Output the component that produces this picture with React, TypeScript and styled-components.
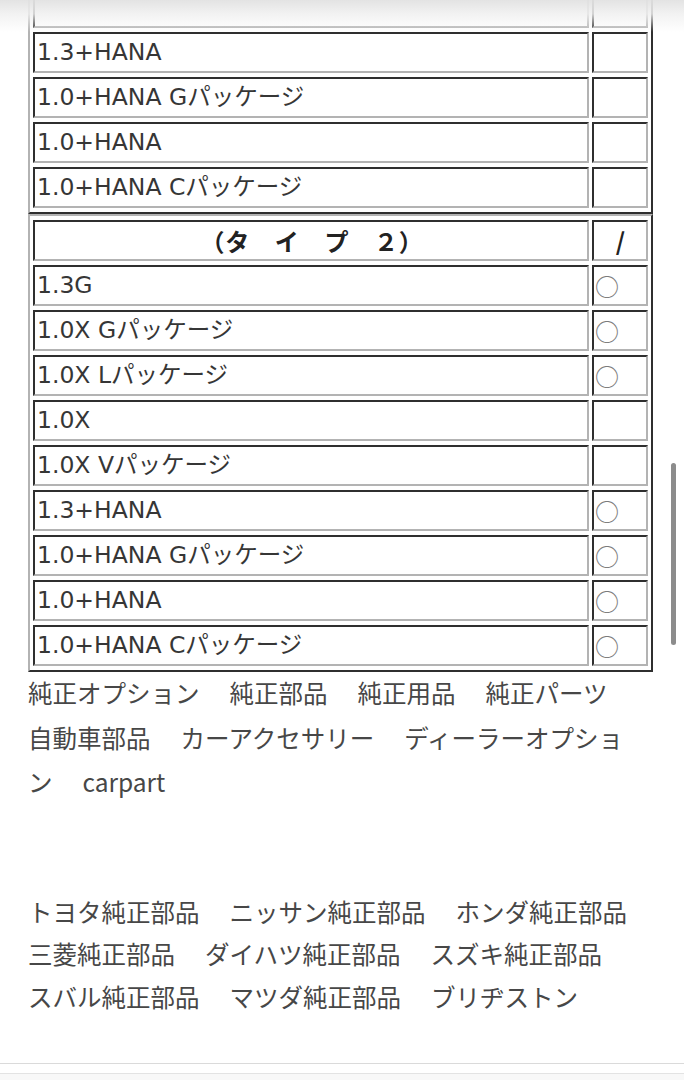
import React from "react";
import styled, { createGlobalStyle } from "styled-components";

const GlobalStyle = createGlobalStyle`
  html, body { margin: 0; padding: 0; background: #ffffff; }
  body { font-family: "Noto Sans CJK JP", "Noto Sans", sans-serif; }
`;

const Page = styled.div`
  position: relative;
  width: 684px;
  height: 1080px;
  overflow: hidden;
  background: #ffffff;
`;

const Content = styled.div`
  margin-top: -19px;
  padding-left: 28px;
`;

const SpecTable = styled.table`
  width: 625px;
  border-collapse: separate;
  border-spacing: 3px 4px;
  border-style: solid;
  border-width: 2px;
  border-color: #b3b3b3 #2f2f2f #2f2f2f #b3b3b3;
  table-layout: fixed;
`;

const Col = styled.col<{ $w?: number }>`
  width: ${(p) => (p.$w ? `${p.$w}px` : "auto")};
`;

const Row = styled.tr`
  height: 41px;
`;

const Cell = styled.td<{ $head?: boolean; $check?: boolean }>`
  box-sizing: border-box;
  border-style: solid;
  border-width: 2px;
  border-color: #2f2f2f #b3b3b3 #b3b3b3 #2f2f2f;
  padding: 0 0 0 ${(p) => (p.$check ? "1px" : "2px")};
  vertical-align: middle;
  white-space: nowrap;
  overflow: hidden;
  font-family: ${(p) =>
    p.$head || p.$check
      ? `"Noto Sans CJK JP", sans-serif`
      : `"DejaVu Sans", "Noto Sans CJK JP", sans-serif`};
  font-size: ${(p) => (p.$head || p.$check ? "24px" : "23.5px")};
  font-weight: ${(p) => (p.$head ? 700 : 400)};
  letter-spacing: ${(p) => (p.$head && !p.$check ? "0.8px" : "0")};
  text-align: ${(p) => (p.$head ? "center" : "left")};
  color: ${(p) => (p.$check && !p.$head ? "#7a7a7a" : p.$head ? "#222222" : "#363636")};
  line-height: 1;
`;

const Keywords = styled.div<{ $lh: number; $mt: number }>`
  width: 614px;
  margin-top: ${(p) => p.$mt}px;
  font-size: 24.5px;
  line-height: ${(p) => p.$lh}px;
  word-spacing: 24.5px;
  color: #474747;
`;

const Footer = styled.div`
  margin-top: 45px;
  border-top: 1.5px solid #dadada;
`;

const FooterBar = styled.div`
  margin-top: 9px;
  height: 30px;
  border-top: 1px solid #e3e3e3;
  background: #f8f8f8;
`;

const TopFade = styled.div`
  position: absolute;
  top: 0;
  left: 0;
  right: 0;
  height: 34px;
  background: linear-gradient(
    to bottom,
    rgba(226, 226, 226, 0.96) 0px,
    rgba(240, 240, 240, 0.85) 14px,
    rgba(255, 255, 255, 0) 32px
  );
  pointer-events: none;
`;

const Scrollbar = styled.div`
  position: absolute;
  left: 671px;
  top: 463px;
  width: 5px;
  height: 182px;
  border-radius: 3px;
  background: #8c8c8c;
`;

type Spec = { name: string; mark?: string };

const table1: Spec[] = [
  { name: "" },
  { name: "1.3+HANA" },
  { name: "1.0+HANA Gパッケージ" },
  { name: "1.0+HANA" },
  { name: "1.0+HANA Cパッケージ" },
];

const table2: Spec[] = [
  { name: "1.3G", mark: "○" },
  { name: "1.0X Gパッケージ", mark: "○" },
  { name: "1.0X Lパッケージ", mark: "○" },
  { name: "1.0X" },
  { name: "1.0X Vパッケージ" },
  { name: "1.3+HANA", mark: "○" },
  { name: "1.0+HANA Gパッケージ", mark: "○" },
  { name: "1.0+HANA", mark: "○" },
  { name: "1.0+HANA Cパッケージ", mark: "○" },
];

const keywords = [
  "純正オプション",
  "純正部品",
  "純正用品",
  "純正パーツ",
  "自動車部品",
  "カーアクセサリー",
  "ディーラーオプション",
  "carpart",
];

const makers = [
  "トヨタ純正部品",
  "ニッサン純正部品",
  "ホンダ純正部品",
  "三菱純正部品",
  "ダイハツ純正部品",
  "スズキ純正部品",
  "スバル純正部品",
  "マツダ純正部品",
  "ブリヂストン",
];

function Columns() {
  return (
    <colgroup>
      <Col />
      <Col $w={56} />
    </colgroup>
  );
}

export default function App() {
  return (
    <>
      <GlobalStyle />
      <Page>
        <Content>
          <SpecTable>
            <Columns />
            <tbody>
              {table1.map((r, i) => (
                <Row key={i}>
                  <Cell>{r.name}</Cell>
                  <Cell $check>{r.mark ?? ""}</Cell>
                </Row>
              ))}
            </tbody>
          </SpecTable>
          <SpecTable>
            <Columns />
            <tbody>
              <Row>
                <Cell $head>（タ　イ　プ　２）</Cell>
                <Cell $head $check>/</Cell>
              </Row>
              {table2.map((r, i) => (
                <Row key={i}>
                  <Cell>{r.name}</Cell>
                  <Cell $check>{r.mark ?? ""}</Cell>
                </Row>
              ))}
            </tbody>
          </SpecTable>
          <Keywords $lh={44.5} $mt={-1}>
            {keywords.join(" ")}
          </Keywords>
          <Keywords $lh={42.5} $mt={86}>
            {makers.join(" ")}
          </Keywords>
        </Content>
        <Footer>
          <FooterBar />
        </Footer>
        <TopFade />
        <Scrollbar />
      </Page>
    </>
  );
}
